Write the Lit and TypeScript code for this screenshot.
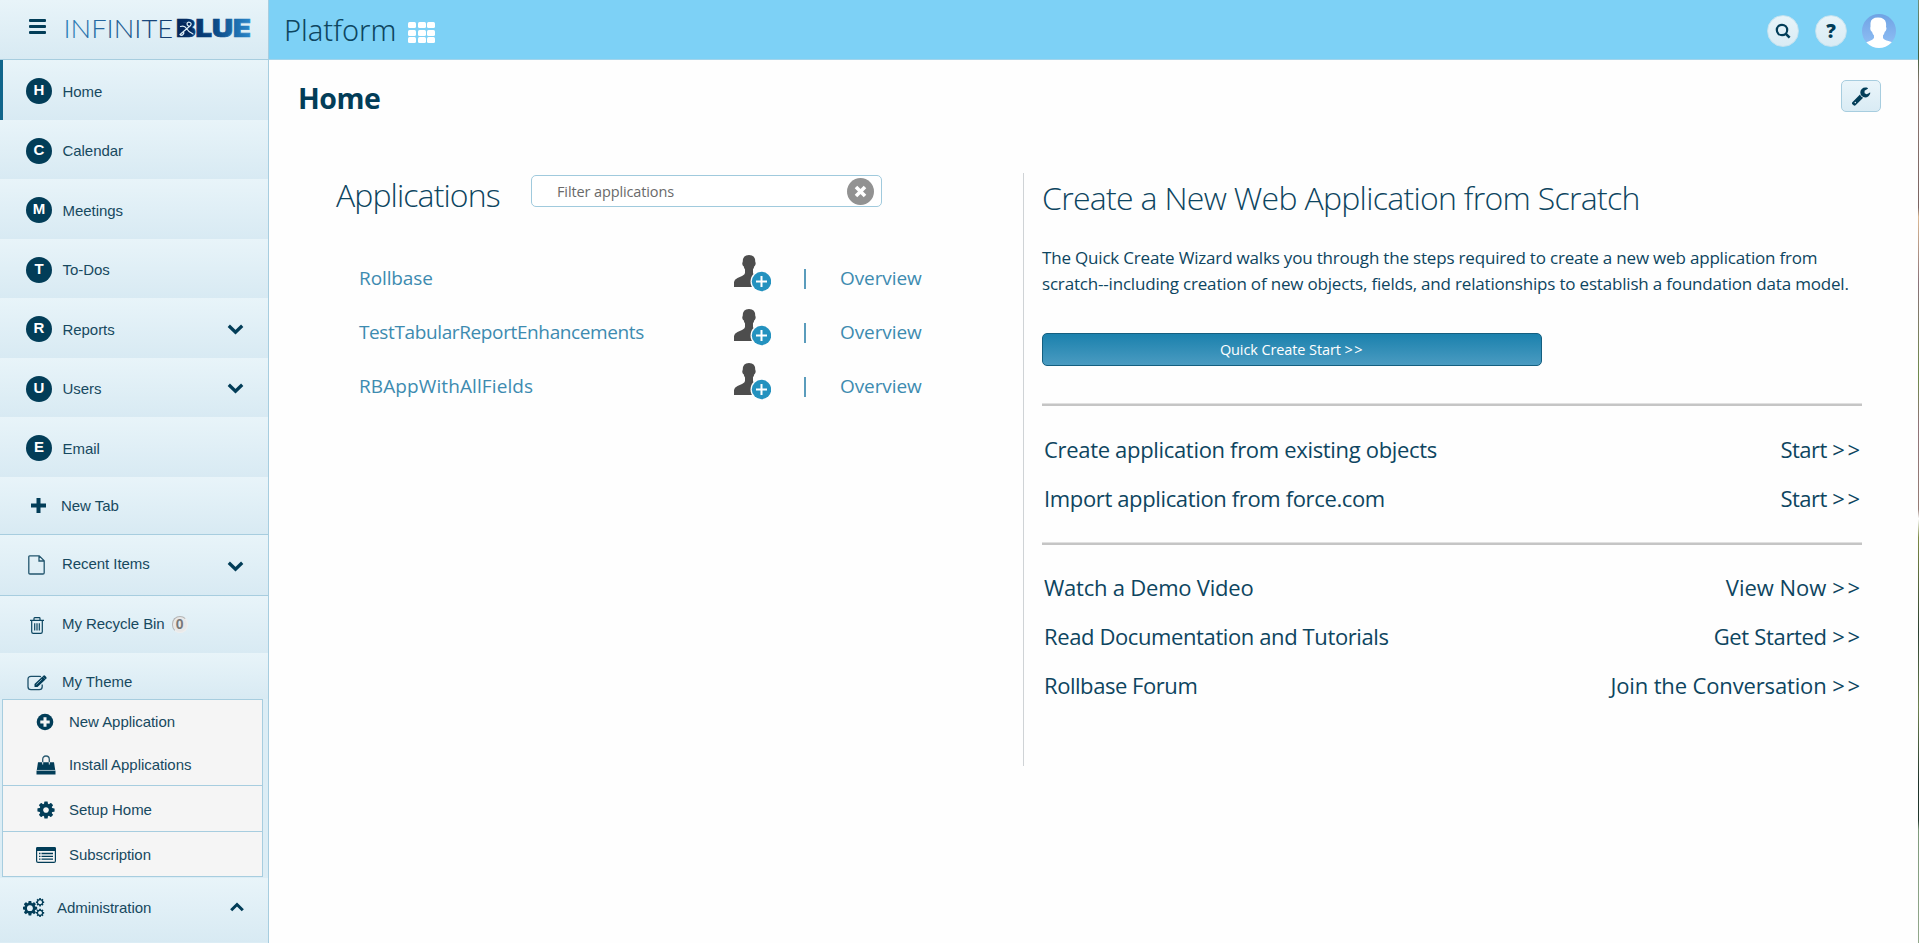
import { LitElement, html, css, svg } from "lit";
import { customElement } from "lit/decorators.js";

const COG = "M1152 896q0-106-75-181t-181-75-181 75-75 181 75 181 181 75 181-75 75-181zm512-109v222q0 12-8 23t-20 13l-185 28q-19 54-39 91 35 50 107 138 10 12 10 25t-9 23q-27 37-99 108t-94 71q-12 0-26-9l-138-108q-44 23-91 38-16 136-29 186-7 28-36 28h-222q-14 0-24.5-8.5t-11.5-21.5l-28-184q-49-16-90-37l-141 107q-10 9-25 9-14 0-25-11-126-114-165-168-7-10-7-23 0-12 8-23 15-21 51-66.5t54-70.5q-27-50-41-99l-183-27q-13-2-21-12.500t-8-23.500v-222q0-12 8-23t19-13l186-28q14-46 39-92-40-57-107-138-10-12-10-24 0-10 9-23 26-36 98.500-107.500t94.500-71.500q13 0 26 10l138 107q44-23 91-38 16-136 29-186 7-28 36-28h222q14 0 24.500 8.500t11.500 21.500l28 184q49 16 90 37l142-107q9-9 24-9 13 0 25 10 129 119 165 170 7 8 7 22 0 12-8 23-15 21-51 66.500t-54 70.500q26 50 41 98l183 28q13 2 21 12.500t8 23.500z";

const icons = {
  plus: svg`<svg width="15" height="15" viewBox="0 0 15 15"><path d="M5.500 0h4v5.500h5.500v4h-5.500v5.500h-4v-5.500h-5.500v-4h5.500z" fill="#023d58"/></svg>`,
  file: svg`<svg width="17" height="20" viewBox="0 0 17 20"><path d="M1.700 0.800h9.500l5 5v12q0 1.200-1.200 1.200h-13q-1.200 0-1.200-1.200v-15.800q0-1.200.9-1.200zM11 1v5h5" fill="none" stroke="#23566e" stroke-width="1.300"/></svg>`,
  trash: svg`<svg width="14" height="17" viewBox="0 0 14 17"><path d="M0 3.300h14M4 3V1.400q0-.7.700-.7h4.600q.7 0 .7.700V3M1.700 3.500v11.200q0 1.600 1.600 1.600h7.400q1.600 0 1.600-1.600V3.500M4.700 6.300v7.200M7 6.300v7.200M9.300 6.300v7.200" fill="none" stroke="#0b4560" stroke-width="1.200"/></svg>`,
  edit: svg`<svg width="20" height="16" viewBox="0 0 20 16"><path d="M14 1.700q-.8-.3-1.700-.3H4Q1 1.400 1 4.300v7.400q0 2.900 3 2.900h8.200q3 0 3-2.900V9.500" fill="none" stroke="#1c506a" stroke-width="1.300"/><path d="M15.500 1.500l3 3-8 7.500H7.500V9zM16.300.8q.9-.9 1.800 0l1.100 1.200q.8.900 0 1.700l-.6.500-2.900-2.800z" fill="#023d58"/><path d="M9.300 9.500l5.500-5.200" stroke="#9fc0cf" stroke-width=".8"/></svg>`,
  add: svg`<svg width="18" height="18" viewBox="0 0 18 18"><circle cx="9" cy="9" r="8.300" fill="#023d58"/><path d="M7.500 4.300h3v3.200h3.200v3h-3.200v3.200h-3v-3.200H4.300v-3h3.200z" fill="#f5f5f5"/></svg>`,
  bag: svg`<svg width="20" height="20" viewBox="0 0 20 20"><path d="M2 7.200h16l1.200 7.800H.8zM.5 15.800h19v3.700h-19z" fill="#023d58"/><path d="M.6 15.400h18.800" stroke="#7f9fac" stroke-width=".8"/><path d="M6.700 7V4.500Q6.700 1 10 1t3.300 3.500V7" fill="none" stroke="#2a5a70" stroke-width="1.300"/><path d="M6.700 7v2.500M13.300 7v2.500" stroke="#dfe8ec" stroke-width="1"/></svg>`,
  cog: svg`<svg width="20" height="20" viewBox="0 0 1792 1792"><path d=${COG} fill="#023d58"/></svg>`,
  card: svg`<svg width="20" height="16" viewBox="0 0 20 16"><rect x=".6" y=".6" width="18.800" height="14.800" rx="1.500" fill="none" stroke="#023d58" stroke-width="1.200"/><path d="M0 1.500Q0 0 1.500 0h17Q20 0 20 1.500V4H0z" fill="#023d58"/><path d="M3 6.500h1.500M3 9.300h1.500M3 12.100h1.500M5.500 6.500h11.500M5.500 9.300h11.500M5.500 12.100h11.500" stroke="#023d58" stroke-width="1.300"/></svg>`,
  cogs: svg`<svg width="22" height="20" viewBox="0 0 22 20"><g fill="#023d58"><path transform="translate(-1.500 1.800) scale(.0094)" d=${COG}/><path transform="translate(12.200 -.6) scale(.0054)" d=${COG}/><path transform="translate(12.200 10) scale(.0054)" d=${COG}/></g><circle cx="6.900" cy="10.200" r="2.900" fill="#e3f1f7"/><circle cx="17.040" cy="4.240" r="1.900" fill="#e3f1f7"/><circle cx="17.040" cy="14.840" r="1.900" fill="#e3f1f7"/></svg>`,
  down: svg`<svg width="17" height="11" viewBox="0 0 17 11"><path d="M1.800 1.800L8.500 8.200l6.700-6.400" fill="none" stroke="#023d58" stroke-width="3.300"/></svg>`,
  up: svg`<svg width="14" height="10" viewBox="0 0 14 10"><path d="M1.200 8.300L7 2.500l5.800 5.800" fill="none" stroke="#023d58" stroke-width="3"/></svg>`,
  search: svg`<svg width="16" height="16" viewBox="0 0 16 16"><circle cx="7" cy="7" r="5.200" fill="none" stroke="#023d58" stroke-width="2.200"/><path d="M10.600 10.600l4 4" stroke="#023d58" stroke-width="2.500"/></svg>`,
  wrench: svg`<svg width="20" height="20" viewBox="0 0 1792 1792"><path fill="#023d58" d="M448 1472q0-26-19-45t-45-19-45 19-19 45 19 45 45 19 45-19 19-45zm644-420l-682 682q-37 37-90 37-52 0-91-37l-106-108q-38-36-38-90 0-53 38-91l681-681q39 98 114.500 173.500t173.500 114.500zm634-435q0 39-23 106-47 134-164.500 217.500t-258.500 83.500q-185 0-316.500-131.500t-131.500-316.500 131.500-316.500 316.500-131.500q58 0 121.500 16.500t107.500 46.500q16 11 16 28t-16 28l-293 169v224l193 107q5-3 79-48.500t135.500-81 70.500-35.500q15 0 23.500 10t8.500 25z"/></svg>`,
  user: svg`<svg width="37" height="37" viewBox="0 0 37 37"><path d="M15 0q6.500 0 6.300 7 .7.800.2 2.500t-1.200 1.800q-.4 2-1.300 3v4q1 2.500 5 4l3 1.500V32H0v-5q.3-2.500 3.500-4l4.500-2q3-1.500 3-3v-3.500q-1-1.200-1.300-3.200-.9-.1-1.300-1.800T8.700 7Q8.500 0 15 0z" fill="#4d4d4d"/><circle cx="27.500" cy="26.500" r="11" fill="#fefefe"/><circle cx="27.500" cy="26.500" r="9.700" fill="#2492bf"/><path d="M27.500 21v11M22 26.500h11" stroke="#fff" stroke-width="2"/></svg>`,
  avatar: svg`<svg width="34" height="34" viewBox="0 0 34 34"><defs><linearGradient id="av" x1="0" y1="0" x2="0" y2="1"><stop offset="0" stop-color="#6fa3e4"/><stop offset="1" stop-color="#92c0f5"/></linearGradient><clipPath id="ac"><circle cx="17" cy="17" r="17"/></clipPath></defs><circle cx="17" cy="17" r="17" fill="url(#av)"/><path clip-path="url(#ac)" d="M8.500 9Q9 3.500 16 3.500T24 9q.3 2 0 4 .8.500.3 2.500t-1.500 2.300q-.6 2.400-1.800 3.700v2.500q1 2 5.500 3t6 3v4H1.500v-4Q3 28.500 7 27.300t5-3.300v-2.500q-1.400-1.300-2-3.700-1.200-.3-1.600-2.300T8.500 13z" fill="#fff"/></svg>`,
  clear: svg`<svg width="27" height="27" viewBox="0 0 27 27"><circle cx="13.500" cy="13.500" r="13.500" fill="#929292"/><path d="M9 9l9 9M18 9l-9 9" stroke="#fff" stroke-width="3.600"/></svg>`,
};

const tabs: [string, string, boolean?][] = [["H", "Home"], ["C", "Calendar"], ["M", "Meetings"], ["T", "To-Dos"], ["R", "Reports", true], ["U", "Users", true], ["E", "Email"]];

const apps: [string, number][] = [["Rollbase", -0.1], ["TestTabularReportEnhancements", -0.38], ["RBAppWithAllFields", 0.1]];

type Row = [string, number, string, number];
const createRows: Row[] = [["Create application from existing objects", -0.32, "Start", -0.5], ["Import application from force.com", -0.36, "Start", -0.5]];
const helpRows: Row[] = [["Watch a Demo Video", -0.22, "View Now", 0], ["Read Documentation and Tutorials", -0.39, "Get Started", -0.33], ["Rollbase Forum", -0.45, "Join the Conversation", -0.14]];

@customElement("app-sidebar")
export class AppSidebar extends LitElement {
  static styles = css`
    :host { display: block; width: 268px; border-right: 1px solid #a7cddf; background: #dcedf5; color: #17495f; font: 15px/20px "Liberation Sans", Arial, sans-serif; box-sizing: content-box; }
    .grad { background: linear-gradient(#e8f4f9, #d8eaf3); }
    .brand { display: flex; height: 59px; border-bottom: 1px solid #a7cddf; padding-left: 29px; box-sizing: content-box; }
    .burger { width: 17px; display: flex; flex-direction: column; gap: 3px; padding-top: 19px; }
    .burger i { height: 3px; background: #023d58; border-radius: 1px; }
    .logo { margin-left: 15px; margin-top: 8px; display: block; overflow: visible; }
    .tab { display: flex; height: 59.5px; box-sizing: border-box; padding-left: 26px; padding-top: 3px; align-items: center; }
    .tab.active { border-left: 3px solid #10658b; padding-left: 23px; }
    .dot { width: 26px; height: 26px; border-radius: 50%; background: #023d58; color: #fff; font-weight: bold; text-align: center; line-height: 24px; margin-right: 10.500px; }
    .label { flex: 1; padding-top: 1px; letter-spacing: -0.05px; }
    .chev { width: 17px; height: 11px; margin-right: 24px; display: flex; }
    .link { display: flex; box-sizing: border-box; align-items: center; }
    .ico { width: 34px; margin-left: 28px; display: flex; }
    .ico svg { display: block; }
    .new { height: 58px; border-bottom: 1px solid #a7cddf; padding-top: 1px; }
    .new .ico { margin-left: 31px; width: 30px; }
    .new .label { padding: 0; }
    .recent { height: 61px; border-bottom: 1px solid #a7cddf; }
    .recent .label { padding-bottom: 2px; }
    .recent .chev { padding-top: 4px; }
    .bin { height: 57px; }
    .bin .ico { margin-left: 30px; width: 32px; padding-top: 2px; }
    .bin .label { display: flex; align-items: center; gap: 7px; padding: 0; }
    .badge { width: 14px; height: 15px; border-radius: 8px; background: #e8e8e8; border: 1px solid #eee; border-color: #b5b5b5 #eee #eee #b5b5b5; font-weight: bold; font-size: 14px; line-height: 15px; text-align: center; color: #777; margin-top: 1px; }
    .theme { height: 46.500px; padding-top: 14px; }
    .theme .ico { margin-left: 27px; width: 35px; }
    .theme .label { padding: 0 0 1px; }
    .sub { margin: 0 5px 1px 2px; border: 1px solid #a7cddf; background: #f5f5f5; }
    .sub .link { height: 43px; }
    .sub .ico { margin-left: 33px; width: 33px; }
    .sub .label { padding: 0; }
    .sub .install { border-bottom: 1px solid #a7cddf; padding-top: 2px; }
    .sub .setup { height: 46px; border-bottom: 1px solid #a7cddf; padding-top: 2px; }
    .sub .subscr { height: 44px; padding-top: 2px; }
    .admin { height: 64px; padding-bottom: 5px; }
    .admin .ico { margin-left: 23px; width: 34px; }
    .admin .label { padding: 0; }
    .admin .chev { width: 14px; margin-right: 24px; }
  `;
  render() {
    return html`
      <div class="brand grad">
        <div class="burger"><i></i><i></i><i></i></div>
        <svg class="logo" width="200" height="42" viewBox="-2 -7 200 42">
          <defs>
            <linearGradient id="thin" gradientUnits="userSpaceOnUse" x1="0" y1="0" x2="110" y2="0"><stop offset="0" stop-color="#2d7fba"/><stop offset="1" stop-color="#14386b"/></linearGradient>
            <linearGradient id="bold" gradientUnits="userSpaceOnUse" x1="114" y1="0" x2="188" y2="0"><stop offset="0" stop-color="#04285c"/><stop offset=".45" stop-color="#07417d"/><stop offset="1" stop-color="#2a87ca"/></linearGradient>
          </defs>
          <text x="0.500" y="22.600" font-family="Lato" font-weight="300" font-size="24.500" textLength="109.500" lengthAdjust="spacingAndGlyphs" fill="url(#thin)">INFINITE</text>
          <text x="113" y="22.400" font-family="Inter" font-weight="900" font-size="24" textLength="75" lengthAdjust="spacingAndGlyphs" fill="url(#bold)" stroke="url(#bold)" stroke-width=".7">BLUE</text>
          <rect x="117.500" y="8" width="11" height="12" fill="#04285c"/>
          <g fill="none" stroke="#dfeff7" stroke-width="1.200" stroke-linecap="round"><path d="M117 19.500L127.500 10.500q1.500-2-.5-3t-3 1.200q0 1.500 1.500 2.300M117.500 11.500q4-1.500 6 2t6.500 5.500M117 19.500q1.500 1.500 3 0t.5-3"/></g>
        </svg>
      </div>
      ${tabs.map(([l, t, c], i) => html`<div class="tab grad ${i === 0 ? "active" : ""}"><span class="dot">${l}</span><span class="label">${t}</span>${c ? html`<span class="chev">${icons.down}</span>` : ""}</div>`)}
      <div class="link new grad"><span class="ico">${icons.plus}</span><span class="label">New Tab</span></div>
      <div class="link recent grad"><span class="ico">${icons.file}</span><span class="label">Recent Items</span><span class="chev">${icons.down}</span></div>
      <div class="link bin grad"><span class="ico">${icons.trash}</span><span class="label">My Recycle Bin<span class="badge">0</span></span></div>
      <div class="link theme grad"><span class="ico">${icons.edit}</span><span class="label">My Theme</span></div>
      <div class="sub">
        <div class="link"><span class="ico">${icons.add}</span><span class="label">New Application</span></div>
        <div class="link install"><span class="ico">${icons.bag}</span><span class="label">Install Applications</span></div>
        <div class="link setup"><span class="ico">${icons.cog}</span><span class="label">Setup Home</span></div>
        <div class="link subscr"><span class="ico">${icons.card}</span><span class="label">Subscription</span></div>
      </div>
      <div class="link admin grad"><span class="ico">${icons.cogs}</span><span class="label">Administration</span><span class="chev">${icons.up}</span></div>`;
  }
}

@customElement("app-root")
export class AppRoot extends LitElement {
  static styles = css`
    :host { display: grid; grid-template-columns: 269px 1fr 1px; height: 943px; overflow: hidden; background: #fefefe; color: #0d4560; font-family: "Open Sans", sans-serif; }
    svg { display: block; }
    .edge { background: linear-gradient(#6f8f7a, #43603d 6%, #8d7a74 9%, #7b6461 22%, #dcb893 23%, #8a7379 30%, #6f8a4a 40%, #8f7478 45%, #957c74 54%, #fff 55%, #7d8a45 57%, #2c4030 67%, #6e8250 75%, #1f332a 83%, #22382c 87%, #7f9a7c 88%, #93a88c); }
    .top { display: flex; align-items: center; height: 59px; border-bottom: 1px solid #a4d4ea; background: #7dd1f6; padding: 0 22px 0 15px; }
    .title { font-family: "Noto Sans", sans-serif; font-size: 29px; line-height: 40px; font-weight: 300; letter-spacing: -0.05px; padding-top: 1px; width: 124px; white-space: nowrap; }
    .grid { display: grid; grid-template-columns: repeat(3, 8px); grid-auto-rows: 6px; gap: 1.500px; margin-top: 6px; flex: 1; }
    .grid i { background: #fff; border-radius: 1.500px; }
    .round { width: 32px; height: 32px; box-sizing: border-box; border-radius: 50%; border: 1px solid #c4e2ef; background: linear-gradient(#e8f4f9, #d9ebf4); margin-right: 16px; margin-top: 2px; display: flex; align-items: center; justify-content: center; font: 800 19px/28px "Open Sans", sans-serif; color: #023d58; }
    .avatar { margin-top: 2px; margin-left: -1px; }
    .head { display: flex; justify-content: space-between; align-items: flex-start; padding: 20px 37px 0 29px; height: 93px; }
    h1 { margin: 0; font-size: 28.500px; line-height: 36px; font-weight: 700; letter-spacing: -0.5px; color: #023d58; }
    .tool { width: 40px; height: 32px; box-sizing: border-box; border: 1px solid #a7cddf; border-radius: 5px; background: linear-gradient(#eaf5fa, #d9ebf4); display: flex; align-items: center; justify-content: center; }
    .cols { display: grid; grid-template-columns: 754px 1fr; height: 593px; }
    h2 { margin: 0; font-size: 32px; line-height: 40px; font-weight: 300; letter-spacing: -0.7px; white-space: nowrap; }
    .left { padding-left: 67px; }
    .filter { display: flex; height: 41px; }
    .filter h2 { width: 195px; padding-top: 2px; letter-spacing: -0.9px; }
    .field { margin-top: 2px; width: 351px; height: 32px; box-sizing: border-box; border: 1px solid #a0cadd; border-radius: 5px; background: #fff; display: flex; align-items: center; justify-content: space-between; padding: 0 7px 0 25px; font-size: 14.500px; letter-spacing: -0.12px; color: #6a6a6a; }
    .apps { padding: 37px 0 0 23px; }
    .app { display: grid; grid-template-columns: 375px 70px 36px auto; height: 54px; align-items: center; font-size: 19px; line-height: 54px; color: #3d8bb0; letter-spacing: -0.1px; }
    .pic { align-self: start; padding-top: 4px; }
    .bar { width: 2px; height: 20px; background: #5a9cbc; margin-top: 2px; }
    .right { border-left: 1px solid #cfd3d6; padding: 5px 56px 0 18px; }
    .para { margin: 27px 0 0; font-size: 17px; line-height: 26px; letter-spacing: -0.185px; white-space: nowrap; }
    .start { margin-top: 36px; width: 500px; height: 33px; box-sizing: border-box; border: 1px solid #145f80; border-radius: 5px; background: linear-gradient(#1b81ad, #4a9bc1); color: #fff; font-size: 14.500px; letter-spacing: -0.1px; line-height: 32px; text-align: center; }
    .start .gt { letter-spacing: 1.500px; }
    .rule { height: 3px; background: linear-gradient(#e0e0e0 1px, #c5c5c5 1px); margin: 37px 0 19px; }
    .rule.second { margin: 19px 0 18px; }
    .row { display: flex; justify-content: space-between; height: 49px; line-height: 49px; font-size: 22px; padding: 0 2px; white-space: nowrap; }
    .row .gt { letter-spacing: 2.700px; margin-right: -2.700px; }
  `;
  private rows(list: Row[]) {
    return list.map(([a, la, b, lb]) => html`<div class="row"><span style="letter-spacing:${la}px">${a}</span><span style="letter-spacing:${lb}px">${b} <span class="gt">&gt;&gt;</span></span></div>`);
  }
  render() {
    return html`
      <app-sidebar></app-sidebar>
      <main>
        <div class="top">
          <div class="title">Platform</div>
          <div class="grid">${Array.from({ length: 9 }, () => html`<i></i>`)}</div>
          <div class="round">${icons.search}</div>
          <div class="round">?</div>
          <div class="avatar">${icons.avatar}</div>
        </div>
        <div class="head"><h1>Home</h1><div class="tool">${icons.wrench}</div></div>
        <div class="cols">
          <section class="left">
            <div class="filter"><h2>Applications</h2><div class="field"><span>Filter applications</span>${icons.clear}</div></div>
            <div class="apps">${apps.map(([n, l]) => html`<div class="app"><span style="letter-spacing:${l}px">${n}</span><span class="pic">${icons.user}</span><span class="bar"></span><span>Overview</span></div>`)}</div>
          </section>
          <section class="right">
            <h2>Create a New Web Application from Scratch</h2>
            <div class="para">The Quick Create Wizard walks you through the steps required to create a new web application from<br>scratch--including creation of new objects, fields, and relationships to establish a foundation data model.</div>
            <div class="start">Quick Create Start <span class="gt">&gt;&gt;</span></div>
            <div class="rule"></div>
            ${this.rows(createRows)}
            <div class="rule second"></div>
            ${this.rows(helpRows)}
          </section>
        </div>
      </main>
      <div class="edge"></div>`;
  }
}
